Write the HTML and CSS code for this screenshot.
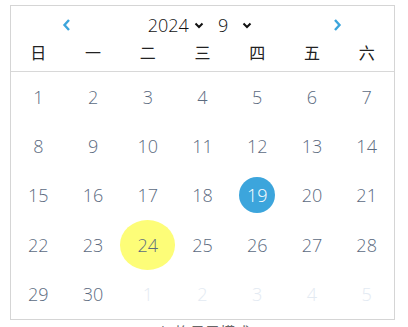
FILE: index.html
```html
<!DOCTYPE html>
<html lang="zh-CN">
<head>
    <meta charset="UTF-8">
    <meta name="viewport" content="width=device-width, initial-scale=1.0">
    <title>日历</title>
    <link rel="stylesheet" href="styles.css">
</head>
<body>
    <div class="calendar">
        <div class="calendar-head">
            <div class="nav">
                <span class="arrow">
                    <svg width="9" height="14" viewBox="0 0 9 14"><path d="M7 2 L2.5 7 L7 12" fill="none" stroke="#3ca5dc" stroke-width="2.4"/></svg>
                </span>
                <div class="pickers">
                    <span class="picker year">2024<svg width="10" height="7" viewBox="0 0 10 7"><path d="M1.5 1.5 L5 5 L8.5 1.5" fill="none" stroke="#111" stroke-width="2"/></svg></span>
                    <span class="picker month">9<svg width="10" height="7" viewBox="0 0 10 7"><path d="M1.5 1.5 L5 5 L8.5 1.5" fill="none" stroke="#111" stroke-width="2"/></svg></span>
                </div>
                <span class="arrow">
                    <svg width="9" height="14" viewBox="0 0 9 14"><path d="M2 2 L6.5 7 L2 12" fill="none" stroke="#3ca5dc" stroke-width="2.4"/></svg>
                </span>
            </div>
            <div class="weekdays">
                <span>日</span><span>一</span><span>二</span><span>三</span><span>四</span><span>五</span><span>六</span>
            </div>
        </div>
        <div class="days">
            <span class="day">1</span><span class="day">2</span><span class="day">3</span><span class="day">4</span><span class="day">5</span><span class="day">6</span><span class="day">7</span>
            <span class="day">8</span><span class="day">9</span><span class="day">10</span><span class="day">11</span><span class="day">12</span><span class="day">13</span><span class="day">14</span>
            <span class="day">15</span><span class="day">16</span><span class="day">17</span><span class="day">18</span><span class="day"><span class="today">19</span></span><span class="day">20</span><span class="day">21</span>
            <span class="day">22</span><span class="day">23</span><span class="day marked">24</span><span class="day">25</span><span class="day">26</span><span class="day">27</span><span class="day">28</span>
            <span class="day">29</span><span class="day">30</span><span class="day other">1</span><span class="day other">2</span><span class="day other">3</span><span class="day other">4</span><span class="day other">5</span>
        </div>
    </div>
    <div class="mode">切换显示模式</div>
</body>
</html>
```

FILE: styles.css
```css
body {
    margin: 0;
    font-family: "Open Sans", "Noto Sans CJK SC", sans-serif;
    background: #fff;
    overflow: hidden;
}
.calendar {
    width: 385px;
    box-sizing: border-box;
    margin: 5px 0 0 10px;
    border: 1px solid #d5d5d5;
}
.calendar-head {
    padding: 7px 0 8px;
    border-bottom: 1px solid #d8d8d8;
}
.nav {
    display: flex;
    align-items: center;
    justify-content: space-between;
    height: 24px;
    padding: 0 52px 0 51px;
}
.arrow {
    display: flex;
    align-items: center;
}
.pickers {
    display: flex;
    align-items: center;
    gap: 14px;
    margin-left: -4px;
}
.picker {
    display: flex;
    align-items: center;
    gap: 5px;
    font-size: 18px;
    font-weight: 300;
    color: #111;
    line-height: 24px;
}
.month {
    gap: 14px;
}
.weekdays {
    display: grid;
    grid-template-columns: repeat(7, 1fr);
    margin-top: 4px;
    height: 22px;
    line-height: 22px;
    text-align: center;
    font-family: "Noto Sans CJK SC", sans-serif;
    font-size: 16px;
    color: #222;
}
.days {
    display: grid;
    grid-template-columns: repeat(7, 1fr);
    grid-auto-rows: 49.4px;
}
.day {
    display: flex;
    align-items: center;
    justify-content: center;
    font-size: 18px;
    font-weight: 300;
    color: #5c6b7f;
    border-radius: 50%;
}
.day.other {
    color: #e3eaf2;
}
.day.marked {
    background: #fdfd78;
}
.today {
    display: flex;
    align-items: center;
    justify-content: center;
    width: 36px;
    height: 36px;
    border-radius: 50%;
    background: #3ca5dc;
    color: #fff;
}
.mode {
    text-align: center;
    margin-top: 1px;
    padding-left: 2px;
    font-family: "Noto Sans CJK SC", sans-serif;
    font-size: 15px;
    color: #666;
}
```
